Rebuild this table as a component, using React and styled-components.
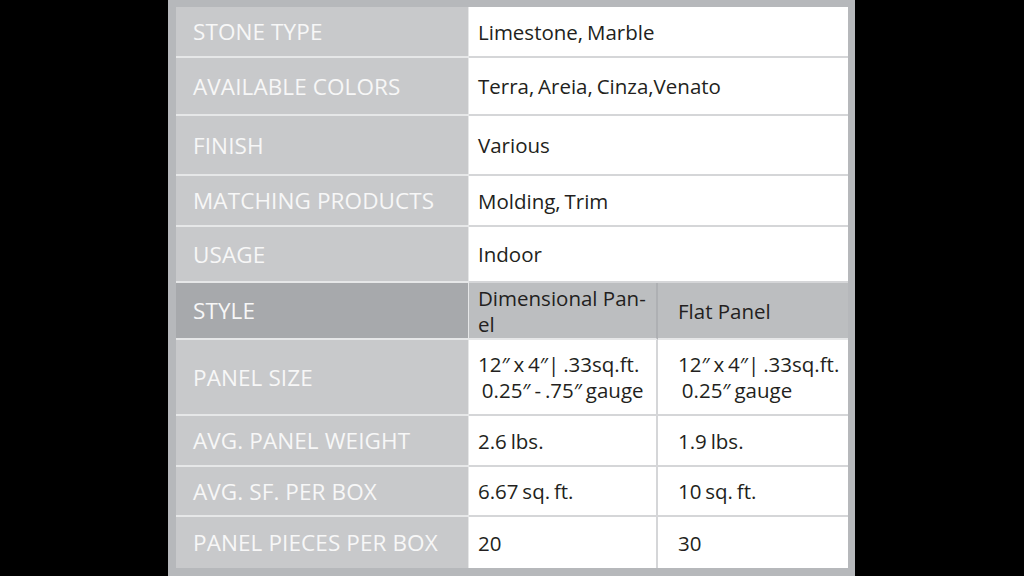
// Packages:
import React from 'react';
import styled, { createGlobalStyle } from 'styled-components';


// Constants:
const COLORS = {
  BLACK: '#000000',
  FRAME: '#b6b8bb',
  LABEL: '#c8c9cb',
  LABEL_DARK: '#a7a9ac',
  HEADER: '#bcbec0',
  LABEL_LINE: '#e6e7e8',
  VALUE_LINE: '#d5d6d8',
  WHITE: '#ffffff',
  LABEL_TEXT: '#f7f7f7',
  VALUE_TEXT: '#231f20',
};

const SPECS = [
  { label: 'STONE TYPE', height: 51, values: [ 'Limestone, Marble' ] },
  { label: 'AVAILABLE COLORS', height: 58, values: [ 'Terra, Areia, Cinza,Venato' ] },
  { label: 'FINISH', height: 60, values: [ 'Various' ] },
  { label: 'MATCHING PRODUCTS', height: 51, values: [ 'Molding, Trim' ] },
  { label: 'USAGE', height: 56, values: [ 'Indoor' ] },
];

const PANEL_SPECS = [
  {
    label: 'PANEL SIZE',
    height: 76,
    values: [
      [ '12\u2033 x 4\u2033| .33sq.ft.', '\u00a00.25\u2033 - .75\u2033 gauge' ],
      [ '12\u2033 x 4\u2033| .33sq.ft.', '\u00a00.25\u2033 gauge' ],
    ],
  },
  { label: 'AVG. PANEL WEIGHT', height: 51, values: [ [ '2.6 lbs.' ], [ '1.9 lbs.' ] ] },
  { label: 'AVG. SF. PER BOX', height: 50, values: [ [ '6.67 sq. ft.' ], [ '10 sq. ft.' ] ] },
  { label: 'PANEL PIECES PER BOX', height: 51, values: [ [ '20' ], [ '30' ] ], last: true },
];


// Styles:
const GlobalStyle = createGlobalStyle`
  html, body {
    margin: 0;
    padding: 0;
    background: ${ COLORS.BLACK };
  }
`;

const Page = styled.div`
  display: flex;
  justify-content: flex-start;
  width: 1024px;
  height: 576px;
  background: ${ COLORS.BLACK };
  overflow: hidden;
`;

const Frame = styled.div`
  display: flex;
  flex-direction: column;
  margin-left: 168px;
  width: 672px;
  padding: 7px 7px 8px 8px;
  background: ${ COLORS.FRAME };
  font-family: "Open Sans", "Noto Sans", sans-serif;
`;

const Row = styled.div`
  display: grid;
  grid-template-columns: 293px 189px 190px;
  height: ${ props => props.$height }px;
`;

const Label = styled.div`
  display: flex;
  align-items: center;
  padding-left: 17px;
  background: ${ props => props.$dark ? COLORS.LABEL_DARK : COLORS.LABEL };
  border-bottom: ${ props => props.$last ? 0 : 2 }px solid ${ COLORS.LABEL_LINE };
  border-right: 1px solid ${ COLORS.LABEL_LINE };
  color: ${ COLORS.LABEL_TEXT };
  font-size: 22.5px;
  letter-spacing: 0.1px;
  white-space: nowrap;
`;

const Value = styled.div`
  display: flex;
  flex-direction: column;
  justify-content: center;
  grid-column: ${ props => props.$span ? 'span 2' : 'auto' };
  padding-left: ${ props => props.$second ? 20 : 9 }px;
  background: ${ COLORS.WHITE };
  border-bottom: ${ props => props.$last ? 0 : 2 }px solid ${ COLORS.VALUE_LINE };
  border-right: ${ props => props.$second || props.$span ? 0 : 2 }px solid ${ COLORS.VALUE_LINE };
  color: ${ COLORS.VALUE_TEXT };
  font-size: 20.5px;
  line-height: 26px;
  word-spacing: -1.5px;
  white-space: nowrap;
`;

const HeaderCell = styled.div`
  display: flex;
  flex-direction: column;
  justify-content: center;
  padding-left: ${ props => props.$second ? 20 : 9 }px;
  background: ${ COLORS.HEADER };
  border-bottom: 2px solid ${ COLORS.LABEL_LINE };
  border-right: ${ props => props.$second ? 0 : 2 }px solid #aeb0b3;
  color: ${ COLORS.VALUE_TEXT };
  font-size: 20.5px;
  line-height: 26px;
`;


// Functions:
const App = () => {
  // Return:
  return (
    <Page>
      <GlobalStyle />
      <Frame>
        {
          SPECS.map(spec => (
            <Row key={ spec.label } $height={ spec.height }>
              <Label>{ spec.label }</Label>
              <Value $span>{ spec.values[ 0 ] }</Value>
            </Row>
          ))
        }
        <Row $height={ 57 }>
          <Label $dark>STYLE</Label>
          <HeaderCell>
            <span>Dimensional Pan-</span>
            <span>el</span>
          </HeaderCell>
          <HeaderCell $second>Flat Panel</HeaderCell>
        </Row>
        {
          PANEL_SPECS.map(spec => (
            <Row key={ spec.label } $height={ spec.height }>
              <Label $last={ spec.last }>{ spec.label }</Label>
              {
                spec.values.map((lines, index) => (
                  <Value key={ index } $second={ index === 1 } $last={ spec.last }>
                    { lines.map(line => <span key={ line }>{ line }</span>) }
                  </Value>
                ))
              }
            </Row>
          ))
        }
      </Frame>
    </Page>
  );
};


// Exports:
export default App;
